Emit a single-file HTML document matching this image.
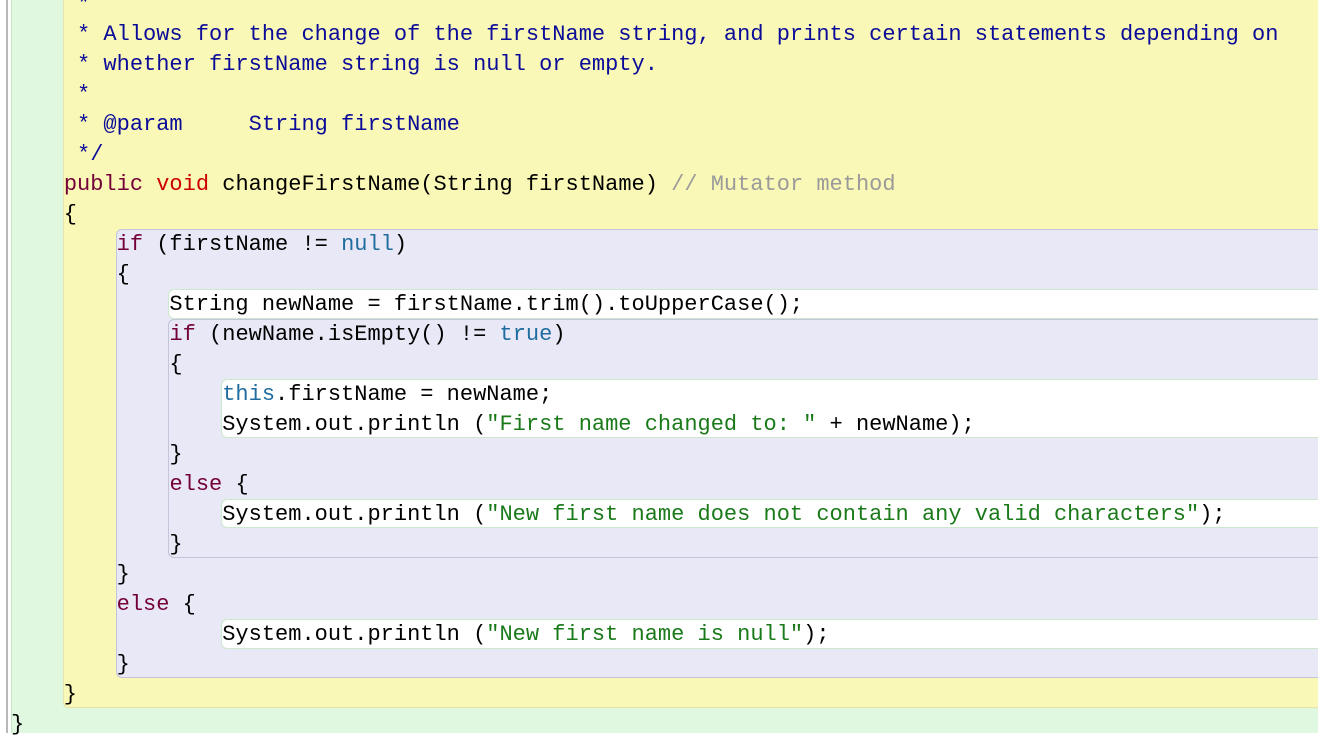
<!DOCTYPE html>
<html><head><style>
html,body{margin:0;padding:0;width:1318px;height:733px;overflow:hidden;background:#fff}
.b{position:absolute;box-sizing:border-box}
pre{position:absolute;left:11px;top:-10px;margin:0;font:22px/30px "Liberation Mono",monospace;color:#000;white-space:pre}
.c{color:#0b0b99}.k{color:#74003a}.v{color:#cc0000}.l{color:#1f6d9e}.s{color:#1a7a1a}.g{color:#9a9a9a}
</style></head><body>
<div class="b" style="left:6px;top:0;width:2px;height:733px;background:#b8b8b8"></div>
<div class="b" style="left:11px;top:0;width:1307px;height:733px;background:#e0f8e0;border-left:1px solid #c4e4c4"></div>
<div class="b" style="left:63px;top:-10px;width:1260px;height:718px;background:#faf8b6;border:1px solid #e6e4a8;border-right:none;border-radius:0 0 0 5px"></div>
<div class="b" style="left:116px;top:229px;width:1210px;height:449px;background:#e8e8f6;border:1px solid #c4c4da;border-right:none;border-radius:6px 0 0 6px"></div>
<div class="b" style="left:168px;top:289px;width:1160px;height:30px;background:#fff;border:1px solid #cde8cd;border-right:none;border-radius:6px 0 0 6px"></div>
<div class="b" style="left:168px;top:319px;width:1160px;height:239px;background:#e8e8f6;border:1px solid #c4c4da;border-right:none;border-radius:6px 0 0 6px"></div>
<div class="b" style="left:221px;top:379px;width:1100px;height:59px;background:#fff;border:1px solid #cde8cd;border-right:none;border-radius:6px 0 0 6px"></div>
<div class="b" style="left:221px;top:499px;width:1100px;height:29px;background:#fff;border:1px solid #cde8cd;border-right:none;border-radius:6px 0 0 6px"></div>
<div class="b" style="left:221px;top:619px;width:1100px;height:30px;background:#fff;border:1px solid #cde8cd;border-right:none;border-radius:6px 0 0 6px"></div>
<pre><span class="c">     *
     * Allows for the change of the firstName string, and prints certain statements depending on
     * whether firstName string is null or empty.
     *
     * @param     String firstName
     */</span>
    <span class="k">public</span> <span class="v">void</span> changeFirstName(String firstName) <span class="g">// Mutator method</span>
    {
        <span class="k">if</span> (firstName != <span class="l">null</span>)
        {
            String newName = firstName.trim().toUpperCase();
            <span class="k">if</span> (newName.isEmpty() != <span class="l">true</span>)
            {
                <span class="l">this</span>.firstName = newName;
                System.out.println (<span class="s">"First name changed to: "</span> + newName);
            }
            <span class="k">else</span> {
                System.out.println (<span class="s">"New first name does not contain any valid characters"</span>);
            }
        }
        <span class="k">else</span> {
                System.out.println (<span class="s">"New first name is null"</span>);
        }
    }
}</pre>
</body></html>
